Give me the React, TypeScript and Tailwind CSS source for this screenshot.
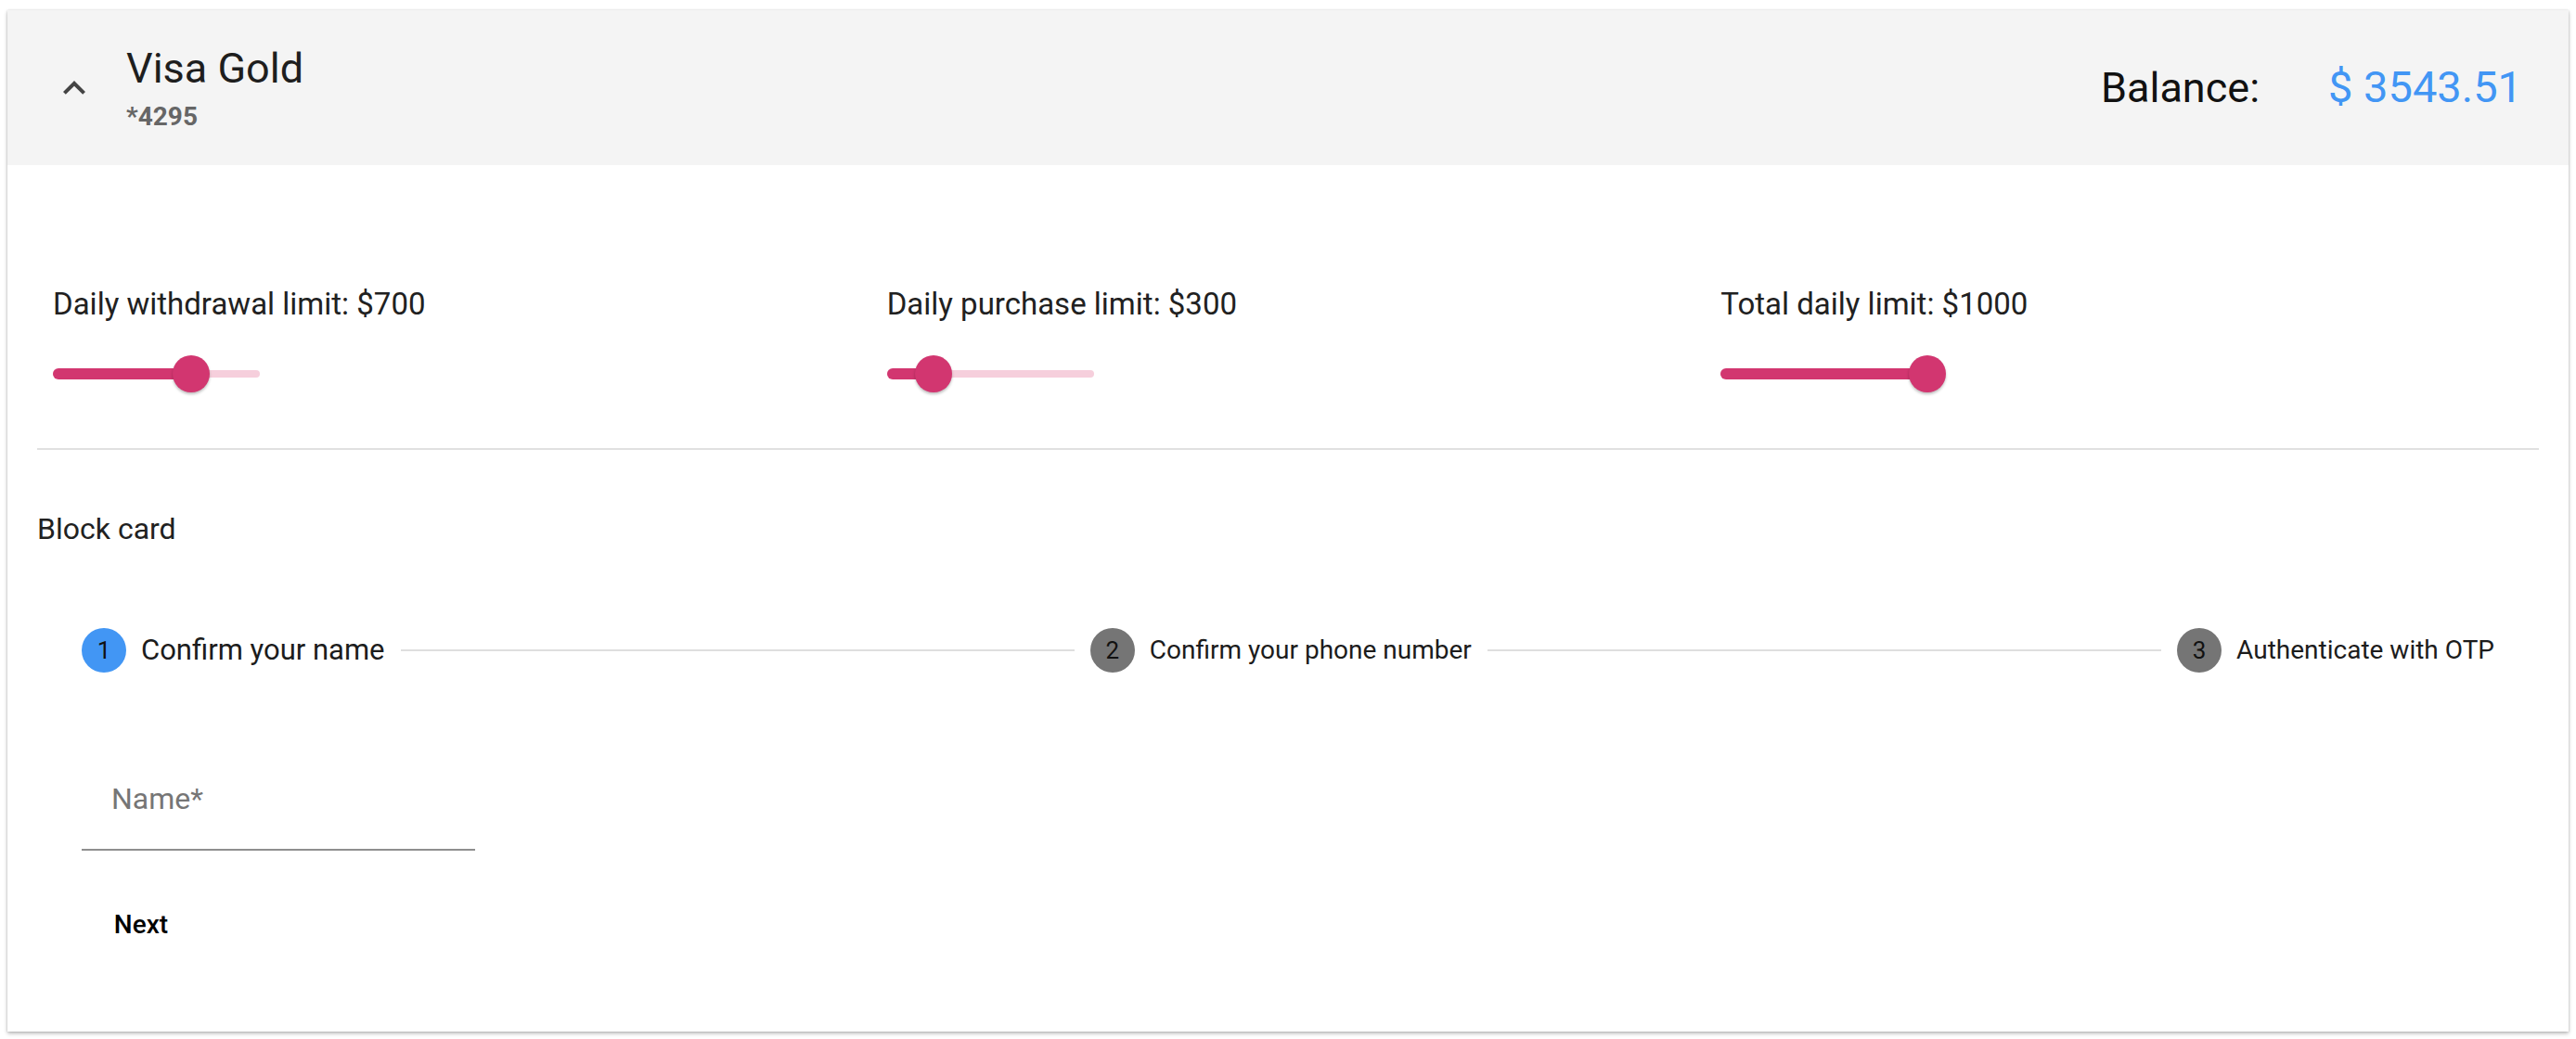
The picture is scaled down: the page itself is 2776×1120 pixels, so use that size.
import React from 'react';

// ============================================
// Types
// ============================================

interface LimitSliderProps {
  /** Label shown above the slider */
  label: string;
  /** Thumb position, 0..1 */
  position: number;
}

interface StepProps {
  index: number;
  label: string;
  active?: boolean;
}

// ============================================
// Data
// ============================================

const limits: LimitSliderProps[] = [
  { label: 'Daily withdrawal limit: $700', position: 0.67 },
  { label: 'Daily purchase limit: $300', position: 0.225 },
  { label: 'Total daily limit: $1000', position: 1 },
];

const steps: StepProps[] = [
  { index: 1, label: 'Confirm your name', active: true },
  { index: 2, label: 'Confirm your phone number' },
  { index: 3, label: 'Authenticate with OTP' },
];

// ============================================
// Limit Slider
// ============================================

const LimitSlider: React.FC<LimitSliderProps> = ({ label, position }) => {
  const pct = `${position * 100}%`;

  return (
    <div className="px-[17px]">
      <div className="text-[33px] leading-[48px] text-[#212121]">{label}</div>
      <div className="relative mt-[31px] flex h-[40px] w-[223px] items-center">
        {/* Rail */}
        <div className="h-[8px] w-full rounded-full bg-[#f6cfdc]" />
        {/* Active track */}
        <div
          className="absolute left-0 top-[14px] h-[12px] rounded-full bg-[#d23670]"
          style={{ width: pct }}
        />
        {/* Thumb */}
        <div
          className="absolute top-0 h-[40px] w-[40px] -translate-x-1/2 rounded-full bg-[#d23670] shadow-[0_2px_3px_rgba(0,0,0,0.25)]"
          style={{ left: pct }}
        />
      </div>
    </div>
  );
};

// ============================================
// Stepper
// ============================================

const Step: React.FC<StepProps> = ({ index, label, active }) => (
  <div className="flex shrink-0 items-center gap-[16px]">
    <div
      className={`flex h-[48px] w-[48px] items-center justify-center rounded-full text-[26px] text-[#111] ${
        active ? 'bg-[#4296f4]' : 'bg-[#757575]'
      }`}
    >
      {index}
    </div>
    <span className={`text-[#1c1c1c] ${active ? 'text-[31px]' : 'text-[28px]'}`}>{label}</span>
  </div>
);

const Stepper: React.FC = () => (
  <div className="flex h-[48px] items-center px-[48px]">
    {steps.map((step, i) => (
      <React.Fragment key={step.index}>
        {i > 0 && <div className="mx-[17px] h-[2px] flex-1 bg-[#dedede]" />}
        <Step {...step} />
      </React.Fragment>
    ))}
  </div>
);

// ============================================
// App
// ============================================

export default function App() {
  return (
    <div className="min-h-screen bg-white px-[8px] pt-[11px] font-['Roboto',sans-serif]">
      <div className="bg-white shadow-[0_2px_4px_rgba(0,0,0,0.28),0_0_2px_rgba(0,0,0,0.14)]">
        {/* Header */}
        <div className="flex h-[167px] items-center bg-[#f4f4f4] pl-[48px] pr-[50px]">
          <svg viewBox="0 0 24 24" className="h-[48px] w-[48px] fill-[#444]">
            <path d="M12 8l-6 6 1.41 1.41L12 10.83l4.59 4.58L18 14z" />
          </svg>
          <div className="ml-[32px] flex flex-col">
            <span className="mb-[8px] text-[45px] leading-[54px] text-[#1e1e1e]">Visa Gold</span>
            <span className="text-[28px] font-bold leading-[34px] text-[#666]">*4295</span>
          </div>
          <div className="ml-auto flex items-center gap-[74px]">
            <span className="text-[45px] text-[#111]">Balance:</span>
            <span className="text-[47px] text-[#4296f4]">$ 3543.51</span>
          </div>
        </div>

        {/* Body */}
        <div className="px-[32px] pb-[79px] pt-[126px]">
          <div className="grid grid-cols-3">
            {limits.map((l) => (
              <LimitSlider key={l.label} {...l} />
            ))}
          </div>

          <div className="mt-[60px] h-[2px] bg-[#e0e0e0]" />

          <div className="mt-[61px] text-[32px] leading-[48px] text-[#212121]">Block card</div>

          <div className="mt-[83px]">
            <Stepper />
          </div>

          <div className="pl-[48px]">
            <input
              placeholder="Name*"
              className="mt-[82px] block h-[110px] w-[424px] border-b-2 border-[#8f8f8f] bg-transparent pl-[32px] text-[32px] text-[#212121] outline-none placeholder:text-[#767676]"
            />
            <button className="mt-[44px] h-[72px] min-w-[128px] rounded-[8px] px-[32px] text-[28px] font-medium text-black">
              Next
            </button>
          </div>
        </div>
      </div>
    </div>
  );
}
